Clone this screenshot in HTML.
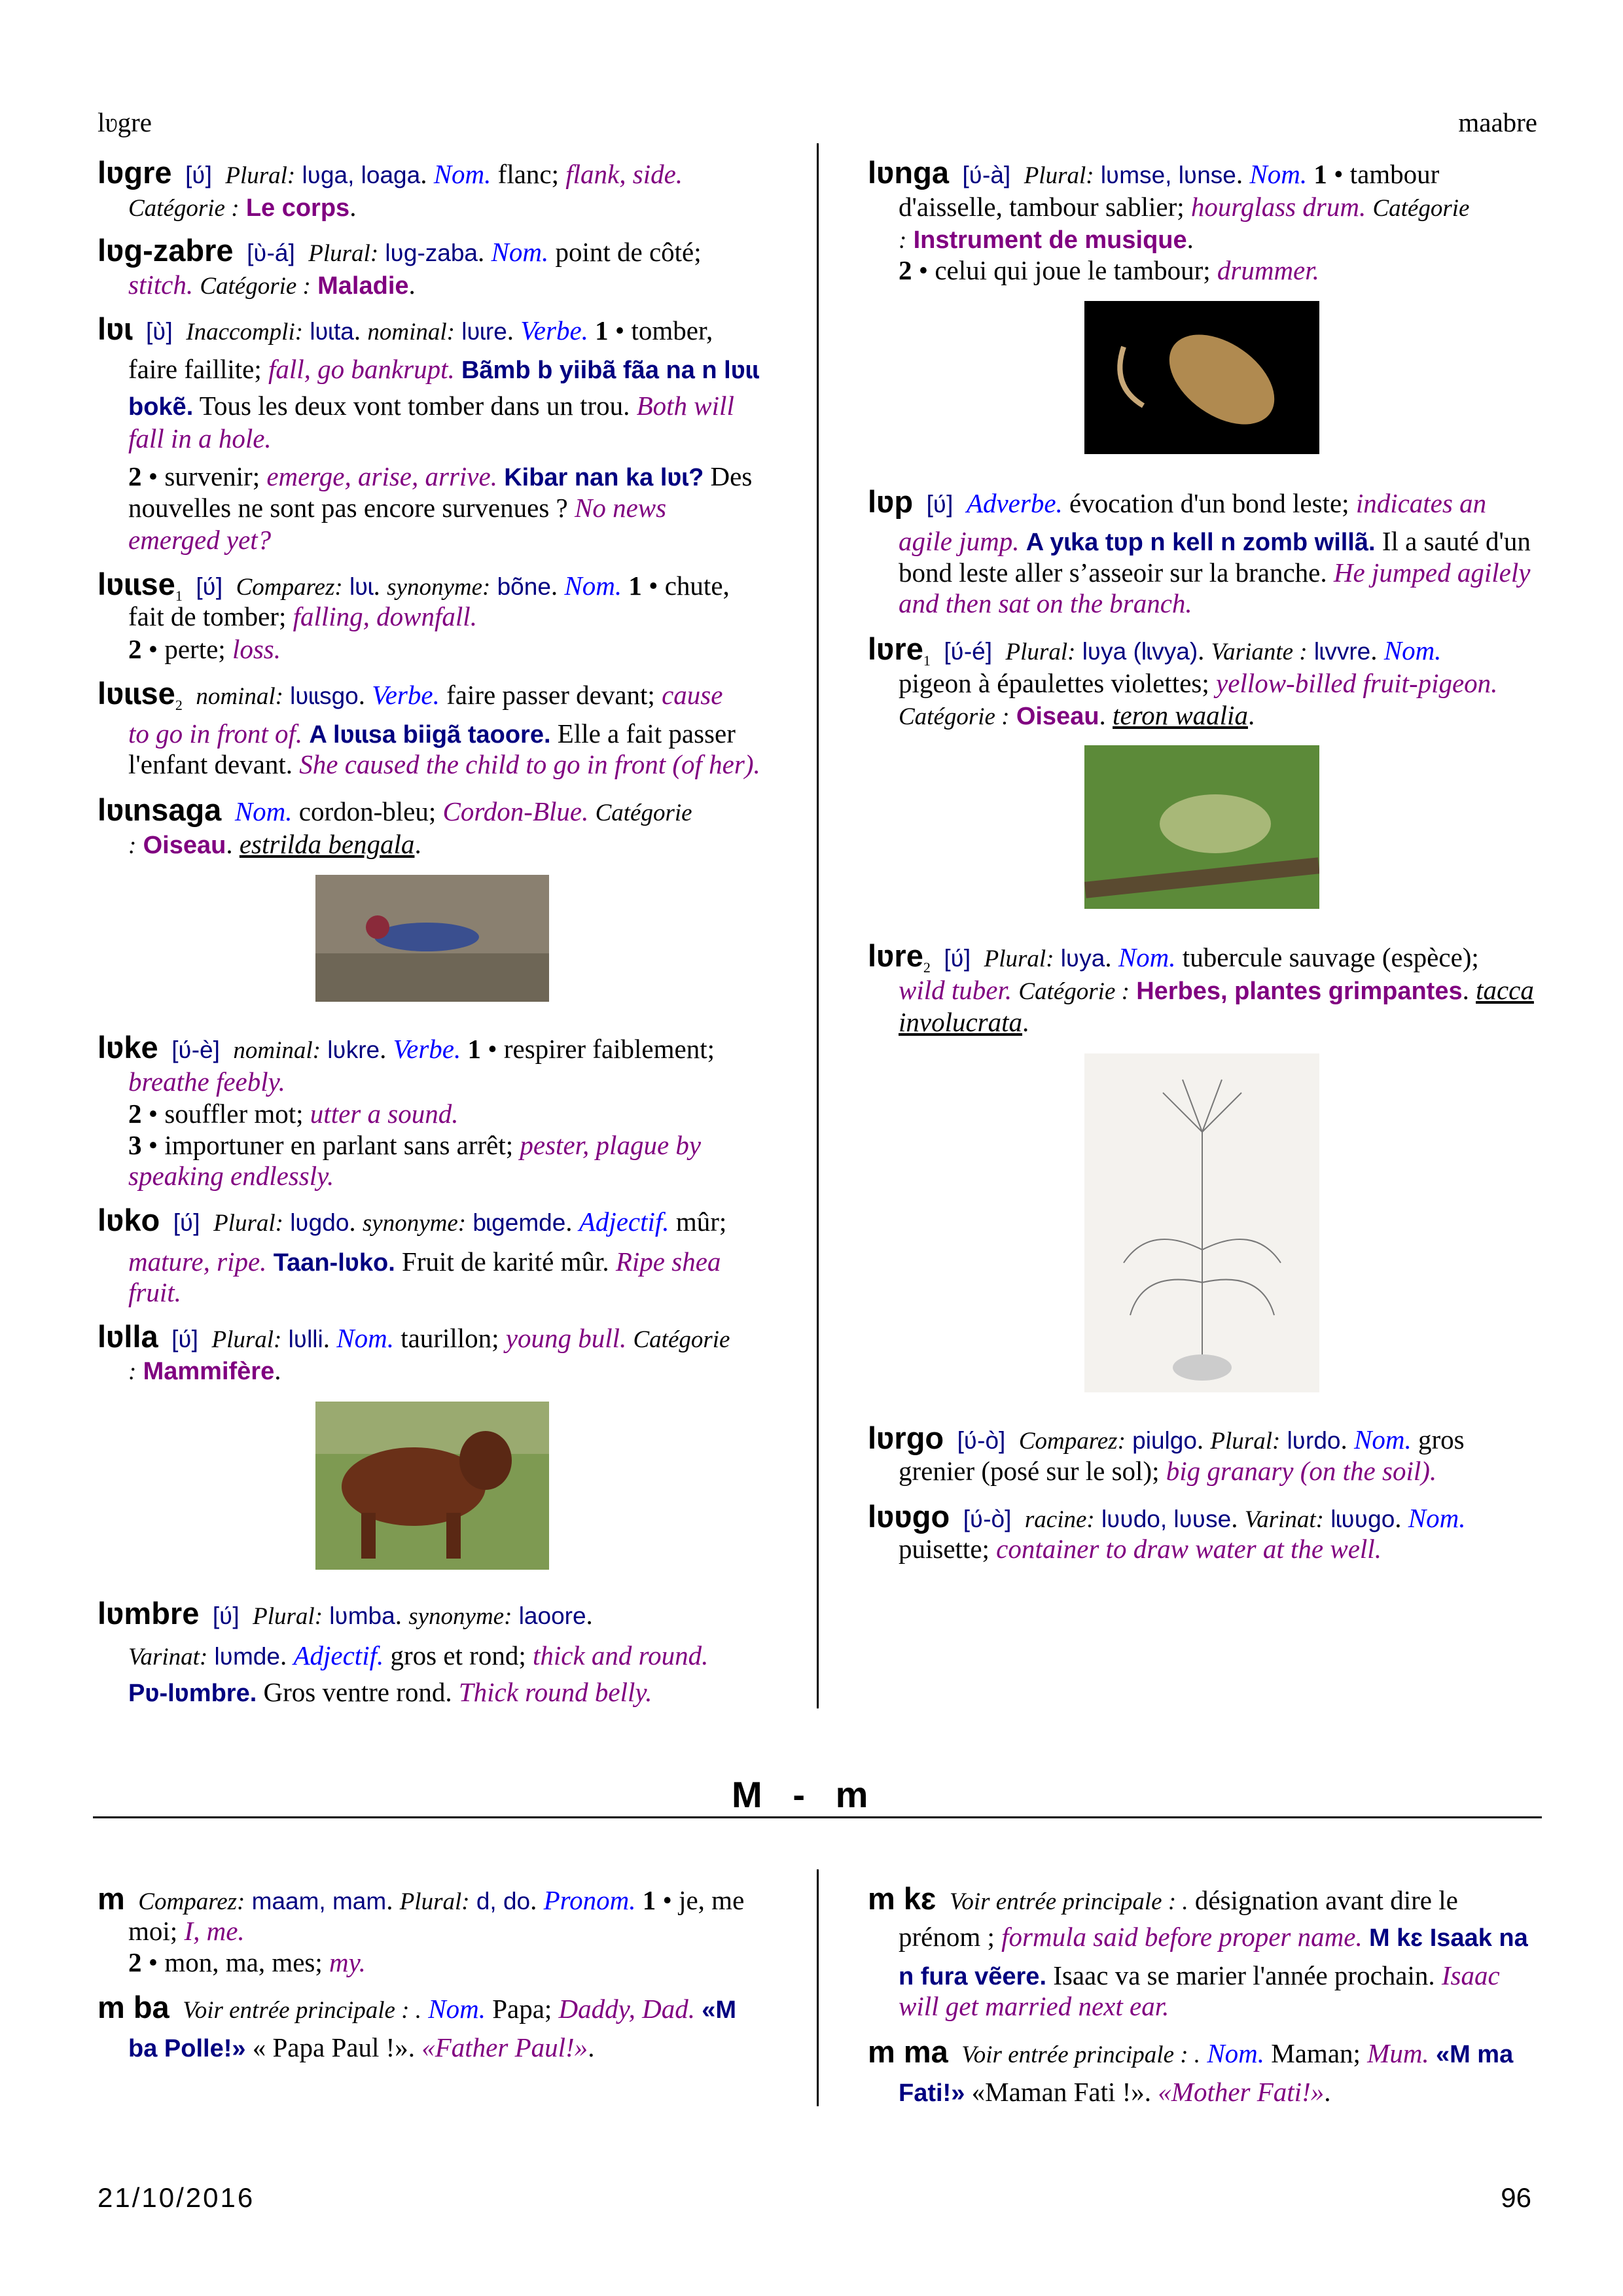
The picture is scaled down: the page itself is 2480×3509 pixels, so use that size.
<!DOCTYPE html>
<html><head><meta charset="utf-8"><style>
body{margin:0;background:#fff}
#pg{position:relative;width:2480px;height:3509px;overflow:hidden;font-family:"Liberation Serif",serif;font-size:41px;color:#000}
.l{position:absolute;line-height:56px;white-space:nowrap}
.L{left:149px}.LI{left:196px}.R{left:1326px}.RI{left:1373px}
.h{font-family:"Liberation Sans","DejaVu Sans",sans-serif;font-weight:bold;font-size:47px}
.p,.v{font-family:"Liberation Sans","DejaVu Sans",sans-serif;color:#000080;font-size:37px}
.vb{font-family:"Liberation Sans","DejaVu Sans",sans-serif;color:#000080;font-weight:bold;font-size:38px}
.i{font-style:italic;font-size:37px}
.n{font-style:italic;color:#0000ff}
.e{font-style:italic;color:#800080}
.c{font-family:"Liberation Sans","DejaVu Sans",sans-serif;color:#800080;font-weight:bold;font-size:38px}
.u{text-decoration:underline;font-style:italic}
sub{font-size:22px}
.vl{position:absolute;width:3px;background:#000}
.img{position:absolute}
</style></head><body><div id="pg">
<div class="l" style="left:149px;top:159px;font-size:41px">lʋgre</div>
<div class="l" style="right:131px;top:159px;font-size:41px">maabre</div>
<div class="vl" style="left:1248px;top:219px;height:2392px"></div>

<div class="l L" style="top:236px"><span class="h">lʋgre</span>&nbsp; <span class="p">[ʋ́]</span>&nbsp; <span class="i">Plural:</span> <span class="v">lʋga, loaga</span>. <span class="n">Nom.</span> flanc; <span class="e">flank, side.</span></div>
<div class="l LI" style="top:288px"><span class="i">Catégorie :</span> <span class="c">Le corps</span>.</div>
<div class="l L" style="top:355px"><span class="h">lʋg-zabre</span>&nbsp; <span class="p">[ʋ̀-á]</span>&nbsp; <span class="i">Plural:</span> <span class="v">lʋg-zaba</span>. <span class="n">Nom.</span> point de côté;</div>
<div class="l LI" style="top:407px"><span class="e">stitch.</span> <span class="i">Catégorie :</span> <span class="c">Maladie</span>.</div>
<div class="l L" style="top:475px"><span class="h">lʋɩ</span>&nbsp; <span class="p">[ʋ̀]</span>&nbsp; <span class="i">Inaccompli:</span> <span class="v">lʋɩta</span>. <span class="i">nominal:</span> <span class="v">lʋɩre</span>. <span class="n">Verbe.</span> <b>1</b> • tomber,</div>
<div class="l LI" style="top:536px">faire faillite; <span class="e">fall, go bankrupt.</span> <span class="vb">Bãmb b yiibã fãa na n lʋɩɩ</span></div>
<div class="l LI" style="top:592px"><span class="vb">bokẽ.</span> Tous les deux vont tomber dans un trou. <span class="e">Both will</span></div>
<div class="l LI" style="top:642px"><span class="e">fall in a hole.</span></div>
<div class="l LI" style="top:700px"><b>2</b> • survenir; <span class="e">emerge, arise, arrive.</span> <span class="vb">Kibar nan ka lʋɩ?</span> Des</div>
<div class="l LI" style="top:748px">nouvelles ne sont pas encore survenues ? <span class="e">No news</span></div>
<div class="l LI" style="top:797px"><span class="e">emerged yet?</span></div>
<div class="l L" style="top:865px"><span class="h">lʋɩɩse</span><sub>1</sub>&nbsp; <span class="p">[ʋ́]</span>&nbsp; <span class="i">Comparez:</span> <span class="v">lʋɩ</span>. <span class="i">synonyme:</span> <span class="v">bõne</span>. <span class="n">Nom.</span> <b>1</b> • chute,</div>
<div class="l LI" style="top:914px">fait de tomber; <span class="e">falling, downfall.</span></div>
<div class="l LI" style="top:964px"><b>2</b> • perte; <span class="e">loss.</span></div>
<div class="l L" style="top:1032px"><span class="h">lʋɩɩse</span><sub>2</sub>&nbsp; <span class="i">nominal:</span> <span class="v">lʋɩɩsgo</span>. <span class="n">Verbe.</span> faire passer devant; <span class="e">cause</span></div>
<div class="l LI" style="top:1093px"><span class="e">to go in front of.</span> <span class="vb">A lʋɩɩsa biigã taoore.</span> Elle a fait passer</div>
<div class="l LI" style="top:1140px">l'enfant devant. <span class="e">She caused the child to go in front (of her).</span></div>
<div class="l L" style="top:1210px"><span class="h">lʋɩnsaga</span>&nbsp; <span class="n">Nom.</span> cordon-bleu; <span class="e">Cordon-Blue.</span> <span class="i">Catégorie</span></div>
<div class="l LI" style="top:1262px"><span class="i">:</span> <span class="c">Oiseau</span>. <span class="u">estrilda bengala</span>.</div>
<svg class="img" style="left:482px;top:1337px" width="357" height="194"><rect width="357" height="194" fill="#8a8070"/><rect y="120" width="357" height="74" fill="#6e6656"/><ellipse cx="170" cy="95" rx="80" ry="22" fill="#3a4f8f"/><circle cx="95" cy="80" r="18" fill="#8a2a3a"/></svg>
<div class="l L" style="top:1573px"><span class="h">lʋke</span>&nbsp; <span class="p">[ʋ́-è]</span>&nbsp; <span class="i">nominal:</span> <span class="v">lʋkre</span>. <span class="n">Verbe.</span> <b>1</b> • respirer faiblement;</div>
<div class="l LI" style="top:1625px"><span class="e">breathe feebly.</span></div>
<div class="l LI" style="top:1674px"><b>2</b> • souffler mot; <span class="e">utter a sound.</span></div>
<div class="l LI" style="top:1722px"><b>3</b> • importuner en parlant sans arrêt; <span class="e">pester, plague by</span></div>
<div class="l LI" style="top:1769px"><span class="e">speaking endlessly.</span></div>
<div class="l L" style="top:1837px"><span class="h">lʋko</span>&nbsp; <span class="p">[ʋ́]</span>&nbsp; <span class="i">Plural:</span> <span class="v">lʋgdo</span>. <span class="i">synonyme:</span> <span class="v">bɩgemde</span>. <span class="n">Adjectif.</span> mûr;</div>
<div class="l LI" style="top:1900px"><span class="e">mature, ripe.</span> <span class="vb">Taan-lʋko.</span> Fruit de karité mûr. <span class="e">Ripe shea</span></div>
<div class="l LI" style="top:1947px"><span class="e">fruit.</span></div>
<div class="l L" style="top:2015px"><span class="h">lʋlla</span>&nbsp; <span class="p">[ʋ́]</span>&nbsp; <span class="i">Plural:</span> <span class="v">lʋlli</span>. <span class="n">Nom.</span> taurillon; <span class="e">young bull.</span> <span class="i">Catégorie</span></div>
<div class="l LI" style="top:2066px"><span class="i">:</span> <span class="c">Mammifère</span>.</div>
<svg class="img" style="left:482px;top:2142px" width="357" height="257"><rect width="357" height="257" fill="#7e9a52"/><rect width="357" height="80" fill="#9aaa70"/><ellipse cx="150" cy="130" rx="110" ry="60" fill="#6a3018"/><ellipse cx="260" cy="90" rx="40" ry="45" fill="#5a2814"/><rect x="70" y="170" width="22" height="70" fill="#5a2814"/><rect x="200" y="170" width="22" height="70" fill="#5a2814"/></svg>
<div class="l L" style="top:2438px"><span class="h">lʋmbre</span>&nbsp; <span class="p">[ʋ́]</span>&nbsp; <span class="i">Plural:</span> <span class="v">lʋmba</span>. <span class="i">synonyme:</span> <span class="v">laoore</span>.</div>
<div class="l LI" style="top:2502px"><span class="i">Varinat:</span> <span class="v">lʋmde</span>. <span class="n">Adjectif.</span> gros et rond; <span class="e">thick and round.</span></div>
<div class="l LI" style="top:2558px"><span class="vb">Pʋ-lʋmbre.</span> Gros ventre rond. <span class="e">Thick round belly.</span></div>

<div class="l R" style="top:236px"><span class="h">lʋnga</span>&nbsp; <span class="p">[ʋ́-à]</span>&nbsp; <span class="i">Plural:</span> <span class="v">lʋmse, lʋnse</span>. <span class="n">Nom.</span> <b>1</b> • tambour</div>
<div class="l RI" style="top:288px">d'aisselle, tambour sablier; <span class="e">hourglass drum.</span> <span class="i">Catégorie</span></div>
<div class="l RI" style="top:337px"><span class="i">:</span> <span class="c">Instrument de musique</span>.</div>
<div class="l RI" style="top:385px"><b>2</b> • celui qui joue le tambour; <span class="e">drummer.</span></div>
<svg class="img" style="left:1657px;top:460px" width="359" height="234"><rect width="359" height="234" fill="#000"/><ellipse cx="210" cy="120" rx="90" ry="55" fill="#b08a50" transform="rotate(35 210 120)"/><path d="M60 70 Q40 130 90 160" stroke="#c8a878" stroke-width="8" fill="none"/></svg>
<div class="l R" style="top:739px"><span class="h">lʋp</span>&nbsp; <span class="p">[ʋ́]</span>&nbsp; <span class="n">Adverbe.</span> évocation d'un bond leste; <span class="e">indicates an</span></div>
<div class="l RI" style="top:799px"><span class="e">agile jump.</span> <span class="vb">A yɩka tʋp n kell n zomb willã.</span> Il a sauté d'un</div>
<div class="l RI" style="top:847px">bond leste aller s’asseoir sur la branche. <span class="e">He jumped agilely</span></div>
<div class="l RI" style="top:894px"><span class="e">and then sat on the branch.</span></div>
<div class="l R" style="top:964px"><span class="h">lʋre</span><sub>1</sub>&nbsp; <span class="p">[ʋ́-é]</span>&nbsp; <span class="i">Plural:</span> <span class="v">lʋya (lɩvya)</span>. <span class="i">Variante :</span> <span class="v">lɩvvre</span>. <span class="n">Nom.</span></div>
<div class="l RI" style="top:1016px">pigeon à épaulettes violettes; <span class="e">yellow-billed fruit-pigeon.</span></div>
<div class="l RI" style="top:1065px"><span class="i">Catégorie :</span> <span class="c">Oiseau</span>. <span class="u">teron waalia</span>.</div>
<svg class="img" style="left:1657px;top:1139px" width="359" height="250"><rect width="359" height="250" fill="#4e7a32"/><rect x="0" y="0" width="359" height="250" fill="#6a9a40" opacity=".5"/><ellipse cx="200" cy="120" rx="85" ry="45" fill="#a8b878"/><rect x="0" y="190" width="359" height="25" fill="#5a4a30" transform="rotate(-6 180 200)"/></svg>
<div class="l R" style="top:1433px"><span class="h">lʋre</span><sub>2</sub>&nbsp; <span class="p">[ʋ́]</span>&nbsp; <span class="i">Plural:</span> <span class="v">lʋya</span>. <span class="n">Nom.</span> tubercule sauvage (espèce);</div>
<div class="l RI" style="top:1485px"><span class="e">wild tuber.</span> <span class="i">Catégorie :</span> <span class="c">Herbes, plantes grimpantes</span>. <span class="u">tacca</span></div>
<div class="l RI" style="top:1534px"><span class="u">involucrata</span>.</div>
<svg class="img" style="left:1657px;top:1610px" width="359" height="518"><rect width="359" height="518" fill="#f4f2ee"/><g stroke="#777" stroke-width="2" fill="none"><path d="M180 470 L180 120"/><path d="M180 300 Q100 260 60 320"/><path d="M180 300 Q260 260 300 320"/><path d="M180 350 Q90 330 70 400"/><path d="M180 350 Q270 330 290 400"/><path d="M180 120 L120 60 M180 120 L240 60 M180 120 L150 40 M180 120 L210 40"/></g><ellipse cx="180" cy="480" rx="45" ry="20" fill="#ccc"/></svg>
<div class="l R" style="top:2170px"><span class="h">lʋrgo</span>&nbsp; <span class="p">[ʋ́-ò]</span>&nbsp; <span class="i">Comparez:</span> <span class="v">piulgo</span>. <span class="i">Plural:</span> <span class="v">lʋrdo</span>. <span class="n">Nom.</span> gros</div>
<div class="l RI" style="top:2220px">grenier (posé sur le sol); <span class="e">big granary (on the soil).</span></div>
<div class="l R" style="top:2290px"><span class="h">lʋʋgo</span>&nbsp; <span class="p">[ʋ́-ò]</span>&nbsp; <span class="i">racine:</span> <span class="v">lʋʋdo, lʋʋse</span>. <span class="i">Varinat:</span> <span class="v">lɩʋʋgo</span>. <span class="n">Nom.</span></div>
<div class="l RI" style="top:2339px">puisette; <span class="e">container to draw water at the well.</span></div>

<div class="l" style="left:1118px;top:2708px;line-height:70px;font-family:'Liberation Sans',sans-serif;font-size:56px;font-weight:bold">M &nbsp;&nbsp;- &nbsp;&nbsp;m</div>
<div style="position:absolute;left:142px;top:2776px;width:2214px;height:3px;background:#000"></div>
<div class="vl" style="left:1248px;top:2857px;height:362px"></div>

<div class="l L" style="top:2874px"><span class="h">m</span>&nbsp; <span class="i">Comparez:</span> <span class="v">maam, mam</span>. <span class="i">Plural:</span> <span class="v">d, do</span>. <span class="n">Pronom.</span> <b>1</b> • je, me</div>
<div class="l LI" style="top:2923px">moi; <span class="e">I, me.</span></div>
<div class="l LI" style="top:2971px"><b>2</b> • mon, ma, mes; <span class="e">my.</span></div>
<div class="l L" style="top:3040px"><span class="h">m ba</span>&nbsp; <span class="i">Voir entrée principale : .</span> <span class="n">Nom.</span> Papa; <span class="e">Daddy, Dad.</span> <span class="vb">«M</span></div>
<div class="l LI" style="top:3101px"><span class="vb">ba Polle!»</span> « Papa Paul !». <span class="e">«Father Paul!»</span>.</div>
<div class="l R" style="top:2874px"><span class="h">m kɛ</span>&nbsp; <span class="i">Voir entrée principale : .</span> désignation avant dire le</div>
<div class="l RI" style="top:2932px">prénom ; <span class="e">formula said before proper name.</span> <span class="vb">M kɛ Isaak na</span></div>
<div class="l RI" style="top:2991px"><span class="vb">n fura vẽere.</span> Isaac va se marier l'année prochain. <span class="e">Isaac</span></div>
<div class="l RI" style="top:3038px"><span class="e">will get married next ear.</span></div>
<div class="l R" style="top:3108px"><span class="h">m ma</span>&nbsp; <span class="i">Voir entrée principale : .</span> <span class="n">Nom.</span> Maman; <span class="e">Mum.</span> <span class="vb">«M ma</span></div>
<div class="l RI" style="top:3169px"><span class="vb">Fati!»</span> «Maman Fati !». <span class="e">«Mother Fati!»</span>.</div>

<div class="l" style="left:149px;top:3331px;font-family:'Liberation Sans',sans-serif;font-size:42px;letter-spacing:3px">21/10/2016</div>
<div class="l" style="right:140px;top:3331px;font-family:'Liberation Sans',sans-serif;font-size:42px">96</div>
</div></body></html>
